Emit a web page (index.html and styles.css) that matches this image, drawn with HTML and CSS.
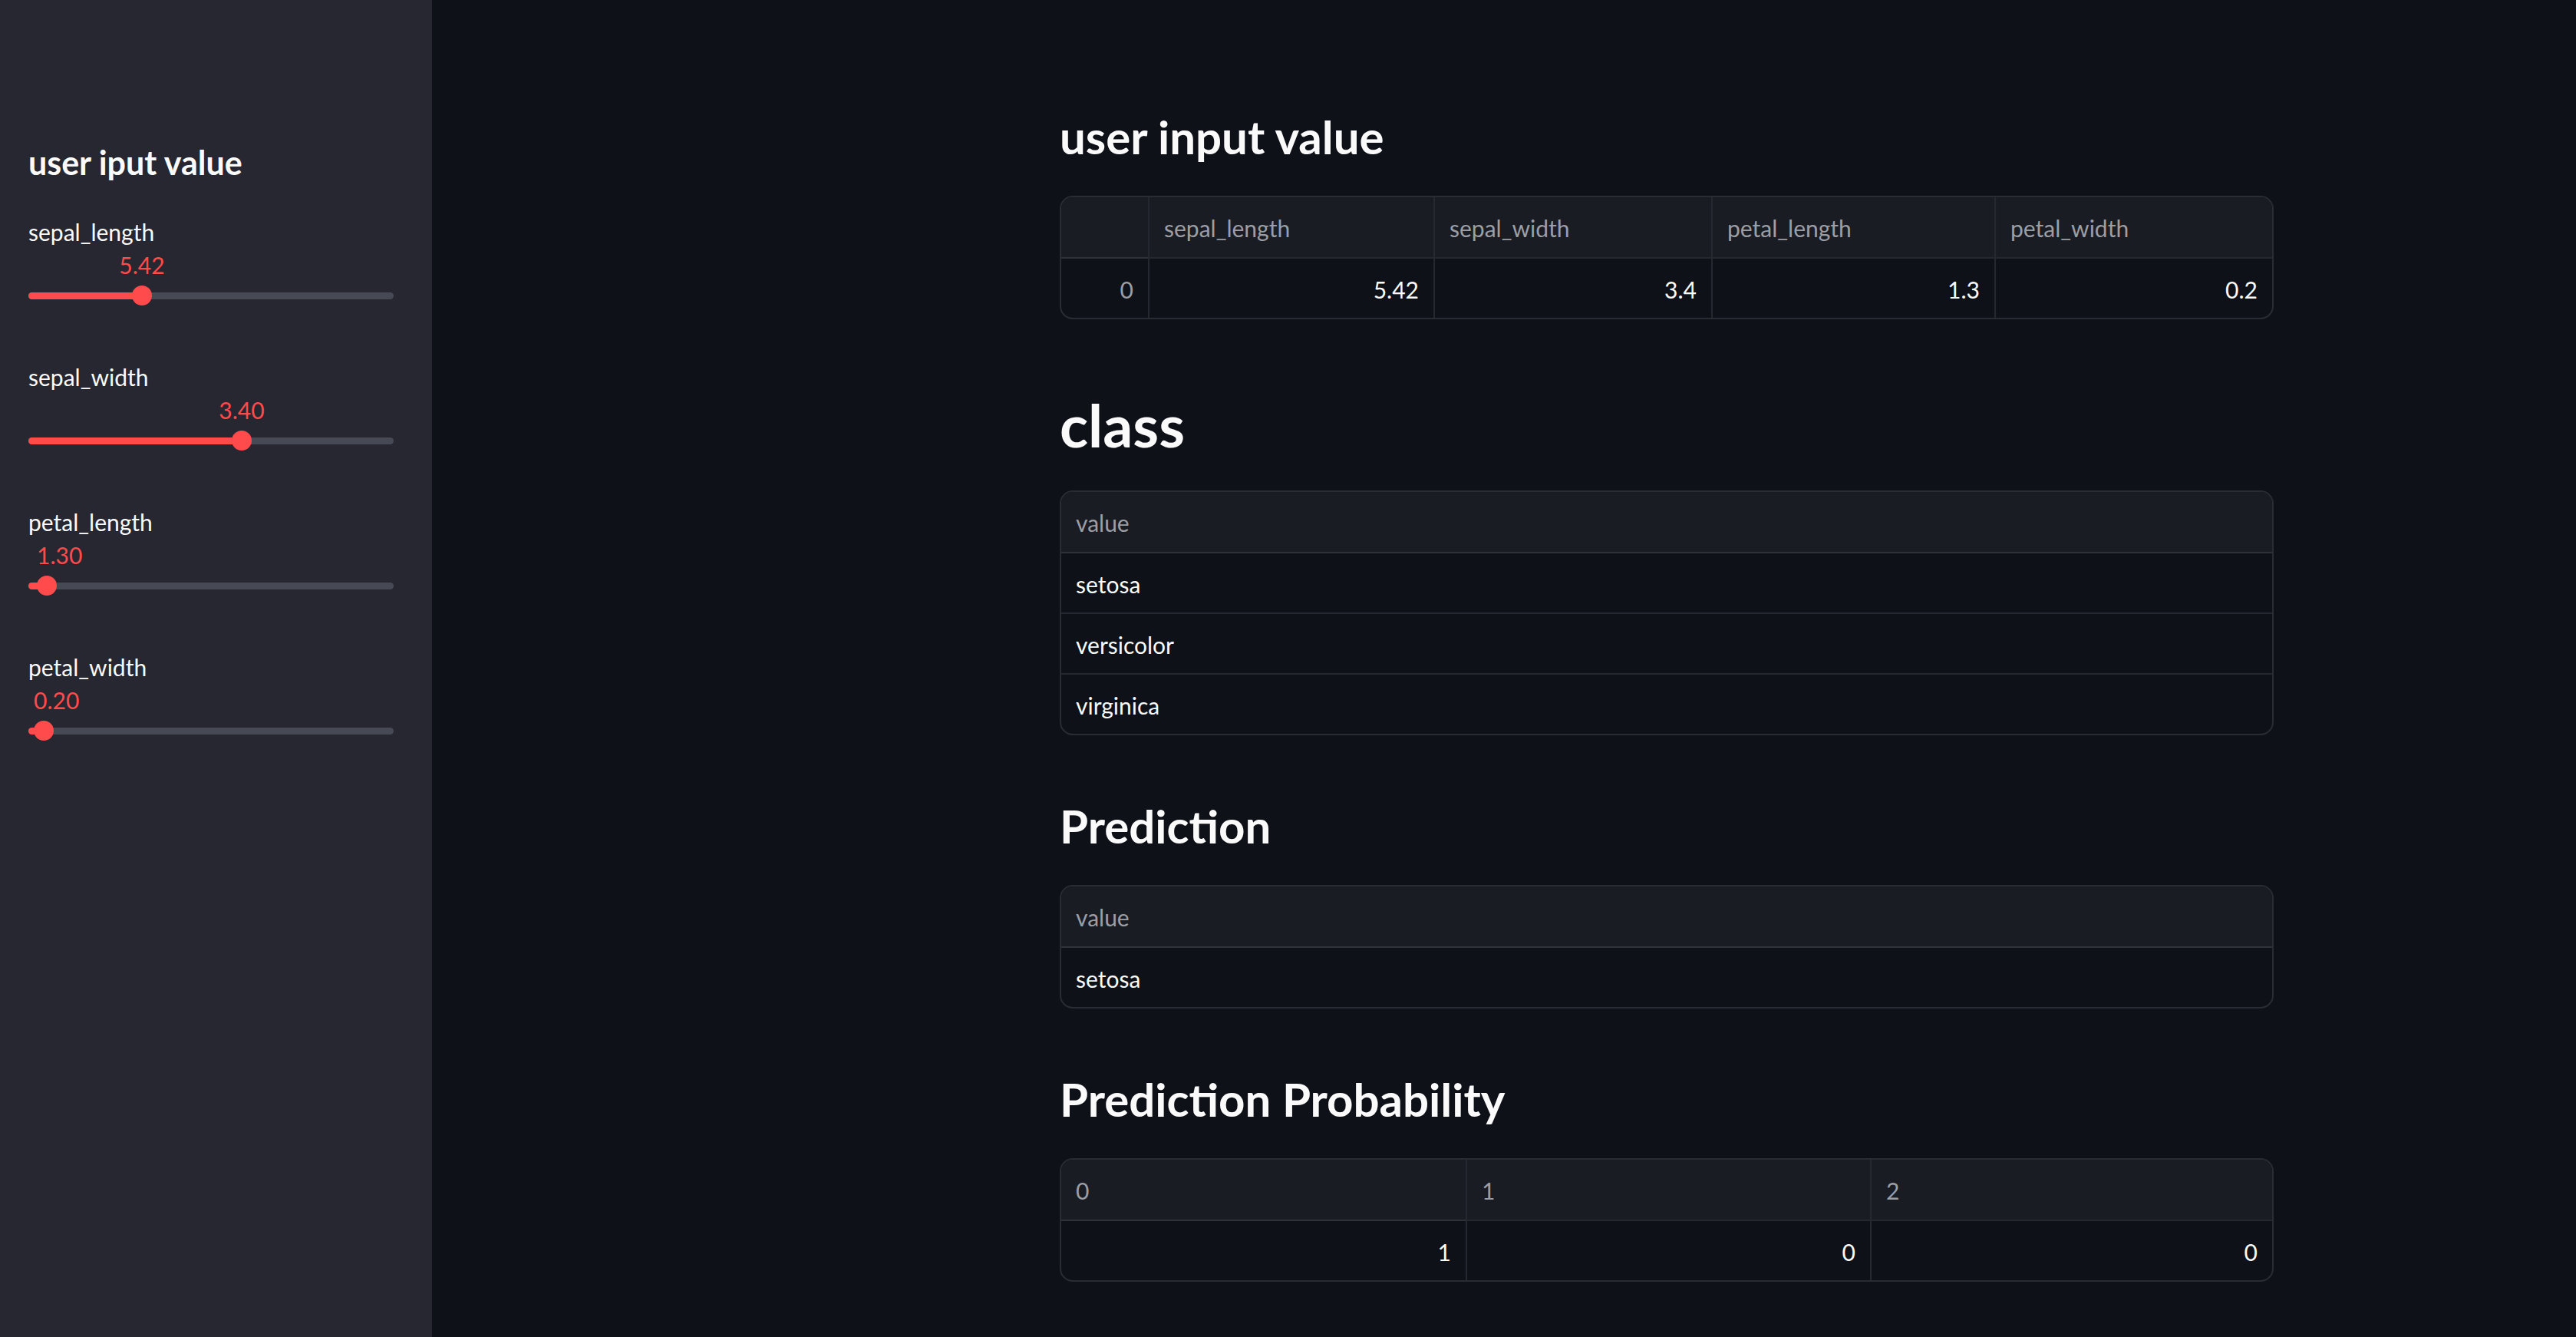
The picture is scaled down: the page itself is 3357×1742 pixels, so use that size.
FILE: index.html
```html
<!DOCTYPE html>
<html lang="en">
<head>
<meta charset="utf-8">
<title>Iris prediction</title>
<link rel="stylesheet" href="styles.css">
</head>
<body>
<div class="app">
  <aside class="sidebar">
    <h2 class="side-title">user iput value</h2>

    <div class="slider">
      <div class="slider-label">sepal_length</div>
      <div class="slider-body">
        <div class="slider-value" style="left:148px">5.42</div>
        <div class="track"><div class="fill" style="width:148px"></div></div>
        <div class="thumb" style="left:148px"></div>
      </div>
    </div>

    <div class="slider">
      <div class="slider-label">sepal_width</div>
      <div class="slider-body">
        <div class="slider-value" style="left:278px">3.40</div>
        <div class="track"><div class="fill" style="width:278px"></div></div>
        <div class="thumb" style="left:278px"></div>
      </div>
    </div>

    <div class="slider">
      <div class="slider-label">petal_length</div>
      <div class="slider-body">
        <div class="slider-value clamp" style="left:11px">1.30</div>
        <div class="track"><div class="fill" style="width:24px"></div></div>
        <div class="thumb" style="left:24px"></div>
      </div>
    </div>

    <div class="slider">
      <div class="slider-label">petal_width</div>
      <div class="slider-body">
        <div class="slider-value clamp" style="left:7px">0.20</div>
        <div class="track"><div class="fill" style="width:20px"></div></div>
        <div class="thumb" style="left:20px"></div>
      </div>
    </div>
  </aside>

  <main class="main">
    <div class="block">
      <h3 class="h3 first">user input value</h3>
      <div class="grid grid-input">
        <div class="cell head"></div>
        <div class="cell head">sepal_length</div>
        <div class="cell head">sepal_width</div>
        <div class="cell head">petal_length</div>
        <div class="cell head">petal_width</div>
        <div class="cell idx num">0</div>
        <div class="cell num">5.42</div>
        <div class="cell num">3.4</div>
        <div class="cell num">1.3</div>
        <div class="cell num">0.2</div>
      </div>

      <h2 class="h2">class</h2>
      <div class="grid grid-one">
        <div class="cell head">value</div>
        <div class="cell">setosa</div>
        <div class="cell">versicolor</div>
        <div class="cell">virginica</div>
      </div>

      <h3 class="h3">Prediction</h3>
      <div class="grid grid-one">
        <div class="cell head">value</div>
        <div class="cell">setosa</div>
      </div>

      <h3 class="h3">Prediction Probability</h3>
      <div class="grid grid-three">
        <div class="cell head">0</div>
        <div class="cell head">1</div>
        <div class="cell head">2</div>
        <div class="cell num">1</div>
        <div class="cell num">0</div>
        <div class="cell num">0</div>
      </div>
    </div>
  </main>
</div>
</body>
</html>
```

FILE: styles.css
```css
* { box-sizing: border-box; }

html, body {
  margin: 0;
  padding: 0;
  background: #0e1117;
  color: #fafafa;
  font-family: Lato, "Noto Sans", sans-serif;
}

.app {
  display: flex;
  min-height: 1742px;
}

/* ---------- sidebar ---------- */
.sidebar {
  width: 563px;
  flex: 0 0 563px;
  background: #262730;
  padding: 186px 50px 0 37px;
}

.side-title {
  margin: 0 0 44px 0;
  font-size: 43px;
  line-height: 52px;
  font-weight: 700;
  color: #fafafa;
}

.slider {
  height: 189px;
}

.slider-label {
  font-size: 30px;
  line-height: 40px;
  height: 40px;
  color: #fafafa;
}

.slider-body {
  position: relative;
  height: 149px;
  width: 476px;
}

.slider-value {
  position: absolute;
  top: 5px;
  font-size: 30px;
  line-height: 36px;
  color: #ff4b4b;
  transform: translateX(-50%);
  white-space: nowrap;
}

.slider-value.clamp {
  transform: none;
}

.track {
  position: absolute;
  left: 0;
  right: 0;
  top: 59px;
  height: 9px;
  border-radius: 5px;
  background: #474955;
  overflow: hidden;
}

.fill {
  height: 100%;
  background: #ff4b4b;
}

.thumb {
  position: absolute;
  top: 50px;
  width: 26px;
  height: 26px;
  margin-left: -13px;
  border-radius: 50%;
  background: #ff4b4b;
}

/* ---------- main ---------- */
.main {
  flex: 1;
  padding: 142px 0 0 818px;
}

.block {
  width: 1582px;
}

.h3 {
  margin: 82px 0 41px 0;
  font-size: 60px;
  line-height: 72px;
  font-weight: 700;
  color: #fafafa;
}

.h3.first {
  margin-top: 0;
}

.h2 {
  margin: 91px 0 40px 0;
  font-size: 77px;
  line-height: 92px;
  font-weight: 700;
  color: #fafafa;
}

.grid {
  display: grid;
  border: 2px solid #2a2c35;
  border-radius: 17px;
  overflow: hidden;
  background: #0e1117;
}

.grid-input {
  grid-template-columns: 113px 372px 362px 369px 1fr;
}

.grid-one {
  grid-template-columns: 1fr;
}

.grid-three {
  grid-template-columns: 527px 527px 1fr;
}

.cell {
  height: 79px;
  padding: 2px 19px 0 19px;
  font-size: 30px;
  line-height: 77px;
  border-top: 2px solid #262831;
  border-left: 2px solid #262831;
  color: #fafafa;
  white-space: nowrap;
}

.cell.head {
  height: 78px;
  border-top: none;
  background: #1a1c23;
  color: #9c9ea6;
}

.grid-input .cell:nth-child(5n+1),
.grid-one .cell,
.grid-three .cell:nth-child(3n+1) {
  border-left: none;
}

.grid .head + .cell:not(.head) {
  border-top-color: #30323b;
}

.cell.num {
  text-align: right;
}

.cell.idx {
  color: #9c9ea6;
}
```
